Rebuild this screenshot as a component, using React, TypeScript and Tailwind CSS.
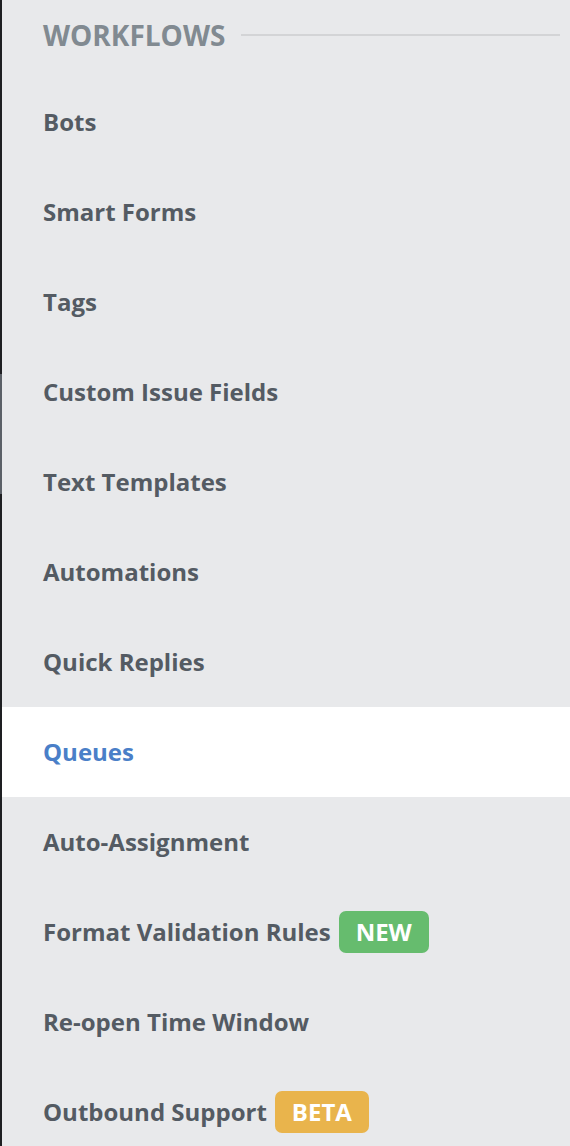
const items: { label: string; badge?: 'new' | 'beta'; active?: boolean }[] = [
  { label: 'Bots' },
  { label: 'Smart Forms' },
  { label: 'Tags' },
  { label: 'Custom Issue Fields' },
  { label: 'Text Templates' },
  { label: 'Automations' },
  { label: 'Quick Replies' },
  { label: 'Queues', active: true },
  { label: 'Auto-Assignment' },
  { label: 'Format Validation Rules', badge: 'new' },
  { label: 'Re-open Time Window' },
  { label: 'Outbound Support', badge: 'beta' },
];

export default function App() {
  return (
    <div className="flex h-[1146px] w-[570px] overflow-hidden bg-[#e8e9eb] font-['Open_Sans',sans-serif]">
      {/* left edge */}
      <div className="flex w-[2px] shrink-0 flex-col">
        <div className="h-[374px] shrink-0 bg-[#1e1f22]" />
        <div className="h-[120px] shrink-0 bg-[#5b6067]" />
        <div className="flex-1 bg-[#1e1f22]" />
      </div>

      <div className="flex flex-1 flex-col">
        {/* section header */}
        <div className="flex h-[77px] shrink-0 items-start pt-[16px] pl-[41px] pr-[10px]">
          <span className="text-[28px] leading-[38px] font-bold text-[#818a91]">WORKFLOWS</span>
          <div className="ml-[16px] mt-[18px] h-[2px] flex-1 bg-[#d3d4d6]" />
        </div>

        {items.map((item) => (
          <div
            key={item.label}
            className={`flex h-[90px] shrink-0 items-center pl-[41px] ${item.active ? 'bg-white' : ''}`}
          >
            <span
              className={`text-[24px] font-bold ${item.active ? 'text-[#4a7fc8]' : 'text-[#545b63]'}`}
            >
              {item.label}
            </span>
            {item.badge === 'new' && (
              <span className="ml-[8px] flex h-[42px] w-[90px] items-center justify-center rounded-[7px] bg-[#66bc6e] text-[24px] font-bold text-white">
                NEW
              </span>
            )}
            {item.badge === 'beta' && (
              <span className="ml-[8px] flex h-[42px] w-[94px] items-center justify-center rounded-[7px] bg-[#e9b44c] text-[24px] font-bold text-white">
                BETA
              </span>
            )}
          </div>
        ))}
      </div>
    </div>
  );
}
